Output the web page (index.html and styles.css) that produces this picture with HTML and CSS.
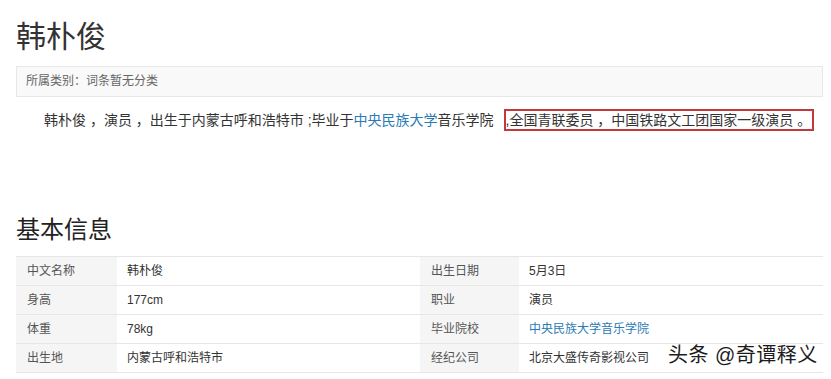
FILE: index.html
```html
<!DOCTYPE html>
<html lang="zh-CN">
<head>
<meta charset="utf-8">
<title>韩朴俊</title>
<link rel="stylesheet" href="styles.css">
</head>
<body>
<div class="page">
  <h1 class="title">韩朴俊</h1>
  <div class="category">所属类别：词条暂无分类</div>
  <p class="summary">韩朴俊 ，演员 ，出生于内蒙古呼和浩特市 ;毕业于<a class="link" href="#">中央民族大学</a>音乐学院 <span class="hl"><span class="cm">,</span>全国青联委员 ，中国铁路文工团国家一级演员 。</span></p>
  <h2 class="section">基本信息</h2>
  <div class="info">
    <div class="k">中文名称</div><div class="v">韩朴俊</div><div class="k">出生日期</div><div class="v">5月3日</div>
    <div class="k">身高</div><div class="v">177cm</div><div class="k">职业</div><div class="v">演员</div>
    <div class="k">体重</div><div class="v">78kg</div><div class="k">毕业院校</div><div class="v"><a class="link" href="#">中央民族大学音乐学院</a></div>
    <div class="k">出生地</div><div class="v">内蒙古呼和浩特市</div><div class="k">经纪公司</div><div class="v">北京大盛传奇影视公司</div>
  </div>
  <div class="watermark">头条 @奇谭释义</div>
</div>
</body>
</html>
```

FILE: styles.css
```css
html, body {
  margin: 0;
  padding: 0;
  background: #fff;
}
body {
  font-family: "Liberation Sans", "Noto Sans CJK SC", sans-serif;
  color: #333;
}
.page {
  position: relative;
  padding: 0 8px 0 16px;
  width: 807px;
  height: 379px;
  overflow: hidden;
}
.title {
  margin: 0;
  padding-top: 17px;
  font-size: 30px;
  line-height: 40px;
  font-weight: normal;
  color: #333;
}
.category {
  margin-top: 9px;
  height: 29px;
  line-height: 29px;
  border: 1px solid #e8e8e8;
  background: #f9f9f9;
  padding: 0 9px;
  font-size: 12px;
  color: #666;
}
.summary {
  margin: 11px 0 0;
  padding-left: 28px;
  font-size: 14px;
  line-height: 24px;
  color: #333;
  white-space: nowrap;
}
.link {
  color: #2a7ab5;
  text-decoration: none;
}
.hl {
  display: inline-block;
  margin-left: 7px;
  border: 2px solid #c3393b;
  line-height: 18px;
  padding: 0 1px 0 0;
  vertical-align: middle;
  position: relative;
  top: -1px;
}
.cm {
  display: inline-block;
  width: 4px;
  margin-left: -1px;
}
.section {
  margin: 82px 0 0;
  font-size: 24px;
  line-height: 32px;
  font-weight: normal;
  color: #222;
}
.info {
  margin-top: 10px;
  display: grid;
  grid-template-columns: 101px 303px 99px 1fr;
  border-top: 1px solid #e6e6e6;
  font-size: 12px;
}
.k, .v {
  height: 28px;
  line-height: 28px;
  border-bottom: 1px solid #e6e6e6;
  padding-left: 10px;
  white-space: nowrap;
}
.k {
  background: #f5f5f5;
  color: #555;
  padding-left: 11px;
}
.v {
  color: #333;
}
.watermark {
  position: absolute;
  left: 668px;
  top: 342px;
  font-size: 20px;
  line-height: 26px;
  letter-spacing: 0.5px;
  color: #1c1c1c;
  text-shadow: 0 0 2px #fff, 0 0 1px #fff;
}
```
